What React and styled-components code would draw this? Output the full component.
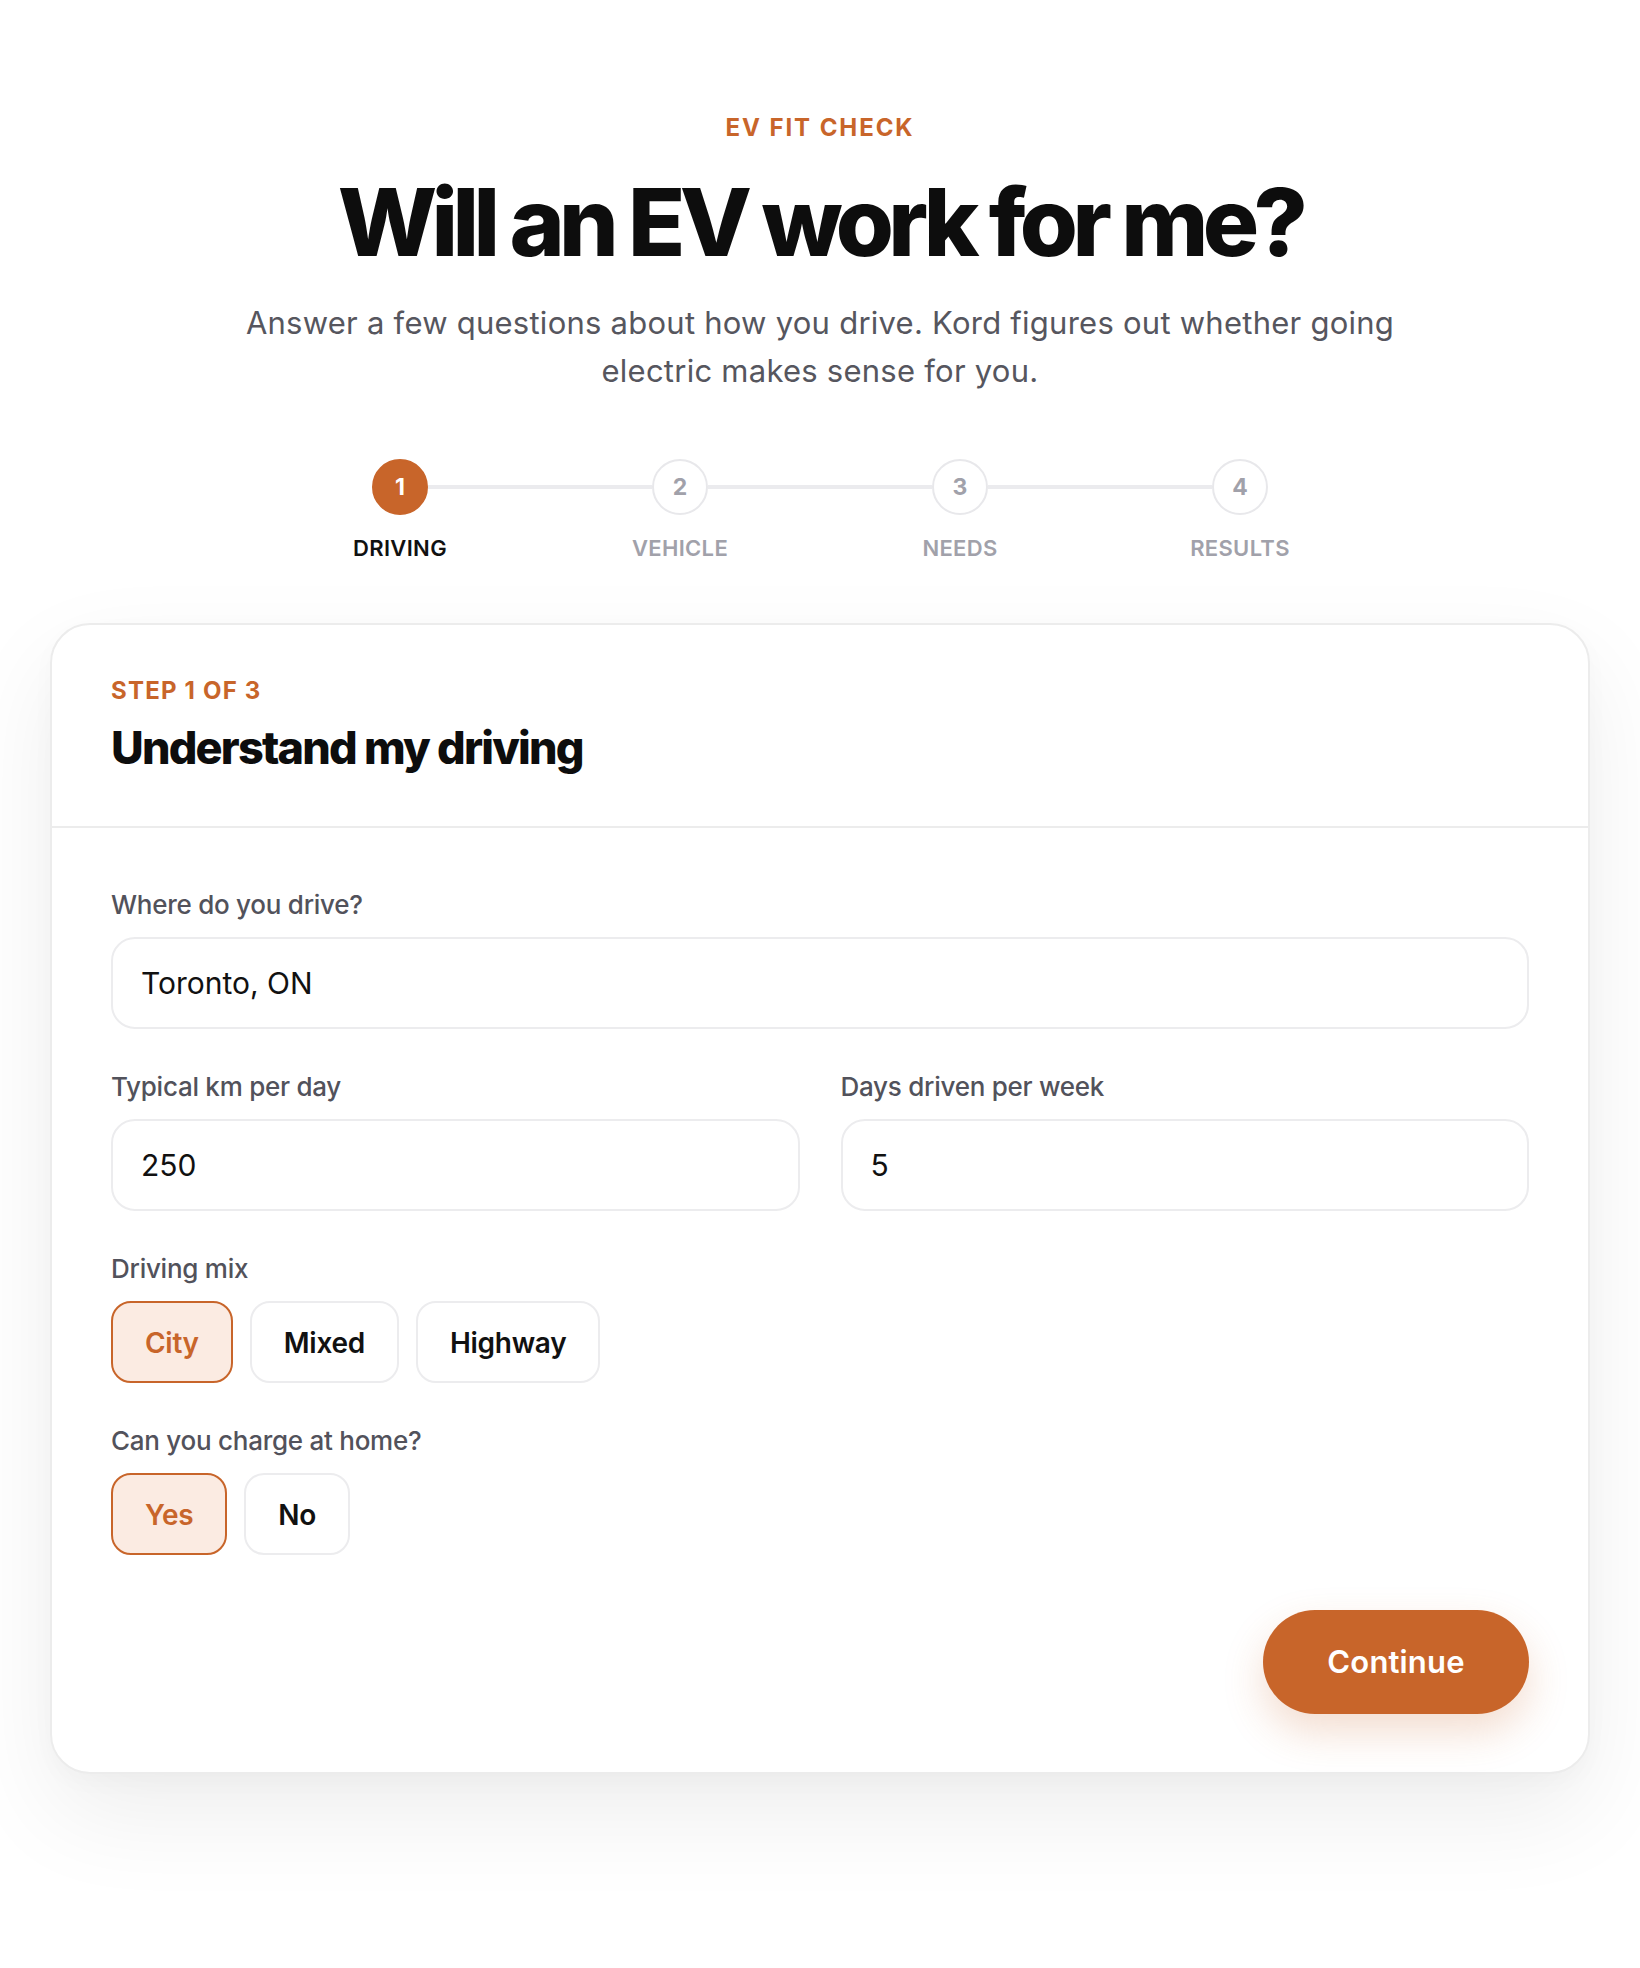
import React from "react";
import styled, { createGlobalStyle } from "styled-components";

const ORANGE = "#C8652A";

const GlobalStyle = createGlobalStyle`
  * { box-sizing: border-box; }
  html, body { margin: 0; padding: 0; background: #ffffff; }
  body {
    font-family: Inter, "Noto Sans", "Liberation Sans", sans-serif;
    color: #111111;
    -webkit-font-smoothing: antialiased;
  }
`;

const Page = styled.main`
  display: flex;
  flex-direction: column;
  align-items: center;
  padding: 114px 50px 200px;
`;

const Eyebrow = styled.div`
  font-size: 24px;
  line-height: 1.2;
  font-weight: 700;
  letter-spacing: 0.08em;
  color: ${ORANGE};
  text-transform: uppercase;
`;

const Title = styled.h1`
  margin: 28px 0 0;
  font-size: 94px;
  line-height: 1.1;
  font-weight: 800;
  letter-spacing: -0.06em;
  color: #0d0d0d;
  text-align: center;
`;

const Subtitle = styled.p`
  margin: 25px 0 0;
  max-width: 1240px;
  font-size: 31px;
  line-height: 48px;
  font-weight: 400;
  letter-spacing: 0.008em;
  color: #56565e;
  text-align: center;
`;

const Stepper = styled.div`
  margin-top: 64px;
  width: 1120px;
  display: flex;
  flex-direction: column;
  gap: 20px;
`;

const Track = styled.div`
  display: flex;
  align-items: center;
  padding: 0 112px;
`;

const Dot = styled.div`
  width: 56px;
  height: 56px;
  flex: none;
  border-radius: 50%;
  display: flex;
  align-items: center;
  justify-content: center;
  font-size: 23px;
  font-weight: 700;
  background: ${(p) => (p.$active ? ORANGE : "#ffffff")};
  color: ${(p) => (p.$active ? "#ffffff" : "#a1a1aa")};
  border: 2px solid ${(p) => (p.$active ? ORANGE : "#e8e8eb")};
`;

const Connector = styled.div`
  flex: 1;
  height: 4px;
  background: #ebebee;
`;

const StepLabels = styled.div`
  display: grid;
  grid-template-columns: repeat(4, 1fr);
`;

const StepLabel = styled.div`
  text-align: center;
  font-size: 22px;
  line-height: 1.2;
  font-weight: 600;
  letter-spacing: 0.015em;
  text-transform: uppercase;
  color: ${(p) => (p.$active ? "#111111" : "#a1a1aa")};
`;

const Card = styled.section`
  margin-top: 61px;
  width: 100%;
  max-width: 1542px;
  background: #ffffff;
  border: 2px solid #ececec;
  border-radius: 40px;
  box-shadow: 0 40px 100px rgba(0, 0, 0, 0.07), 0 8px 24px rgba(0, 0, 0, 0.025);
`;

const CardHeader = styled.header`
  padding: 52px 59px 51px;
  border-bottom: 2px solid #ececec;
  display: flex;
  flex-direction: column;
  gap: 16px;
`;

const StepTag = styled.div`
  font-size: 24px;
  line-height: 1.2;
  font-weight: 700;
  letter-spacing: 0.05em;
  color: ${ORANGE};
  text-transform: uppercase;
`;

const CardTitle = styled.h2`
  margin: 0;
  font-size: 45px;
  line-height: 1.2;
  font-weight: 800;
  letter-spacing: -0.04em;
  color: #0d0d0d;
`;

const CardBody = styled.div`
  padding: 60px 59px 58px;
  display: flex;
  flex-direction: column;
  gap: 41px;
`;

const Field = styled.div`
  display: flex;
  flex-direction: column;
  gap: 15px;
  min-width: 0;
`;

const Row = styled.div`
  display: grid;
  grid-template-columns: 1fr 1fr;
  gap: 41px;
`;

const Label = styled.label`
  font-size: 26px;
  line-height: 1.3;
  font-weight: 500;
  letter-spacing: -0.01em;
  color: #52525b;
`;

const Input = styled.input`
  width: 100%;
  height: 92px;
  padding: 0 28px;
  border: 2px solid #ececee;
  border-radius: 24px;
  background: #ffffff;
  font-family: inherit;
  font-size: 30px;
  font-weight: 400;
  letter-spacing: 0;
  color: #111111;
  outline: none;
`;

const Choices = styled.div`
  display: flex;
  gap: 17px;
`;

const Choice = styled.button`
  height: 82px;
  padding: 2px 32px 0;
  border-radius: 20px;
  border: 2px solid ${(p) => (p.$selected ? ORANGE : "#ececee")};
  background: ${(p) => (p.$selected ? "#FBEBE2" : "#ffffff")};
  color: ${(p) => (p.$selected ? ORANGE : "#111111")};
  font-family: inherit;
  font-size: 28px;
  font-weight: 600;
  letter-spacing: -0.01em;
  cursor: pointer;
`;

const Actions = styled.div`
  display: flex;
  justify-content: flex-end;
  margin-top: 14px;
`;

const PrimaryButton = styled.button`
  width: 266px;
  height: 104px;
  border: none;
  border-radius: 52px;
  background: ${ORANGE};
  color: #ffffff;
  font-family: inherit;
  font-size: 31px;
  font-weight: 600;
  letter-spacing: 0.005em;
  box-shadow: 0 18px 40px rgba(200, 101, 42, 0.22);
  cursor: pointer;
`;

const steps = ["Driving", "Vehicle", "Needs", "Results"];

export default function App() {
  return (
    <>
      <GlobalStyle />
      <Page>
        <Eyebrow>EV Fit Check</Eyebrow>
        <Title>Will an EV work for me?</Title>
        <Subtitle>
          Answer a few questions about how you drive. Kord figures out whether going
          <br />
          electric makes sense for you.
        </Subtitle>

        <Stepper>
          <Track>
            {steps.map((s, i) => (
              <React.Fragment key={s}>
                {i > 0 && <Connector />}
                <Dot $active={i === 0}>{i + 1}</Dot>
              </React.Fragment>
            ))}
          </Track>
          <StepLabels>
            {steps.map((s, i) => (
              <StepLabel key={s} $active={i === 0}>
                {s}
              </StepLabel>
            ))}
          </StepLabels>
        </Stepper>

        <Card>
          <CardHeader>
            <StepTag>Step 1 of 3</StepTag>
            <CardTitle>Understand my driving</CardTitle>
          </CardHeader>
          <CardBody>
            <Field>
              <Label>Where do you drive?</Label>
              <Input defaultValue="Toronto, ON" />
            </Field>
            <Row>
              <Field>
                <Label>Typical km per day</Label>
                <Input defaultValue="250" />
              </Field>
              <Field>
                <Label>Days driven per week</Label>
                <Input defaultValue="5" />
              </Field>
            </Row>
            <Field>
              <Label>Driving mix</Label>
              <Choices>
                <Choice $selected>City</Choice>
                <Choice>Mixed</Choice>
                <Choice>Highway</Choice>
              </Choices>
            </Field>
            <Field>
              <Label>Can you charge at home?</Label>
              <Choices>
                <Choice $selected>Yes</Choice>
                <Choice>No</Choice>
              </Choices>
            </Field>
            <Actions>
              <PrimaryButton>Continue</PrimaryButton>
            </Actions>
          </CardBody>
        </Card>
      </Page>
    </>
  );
}
